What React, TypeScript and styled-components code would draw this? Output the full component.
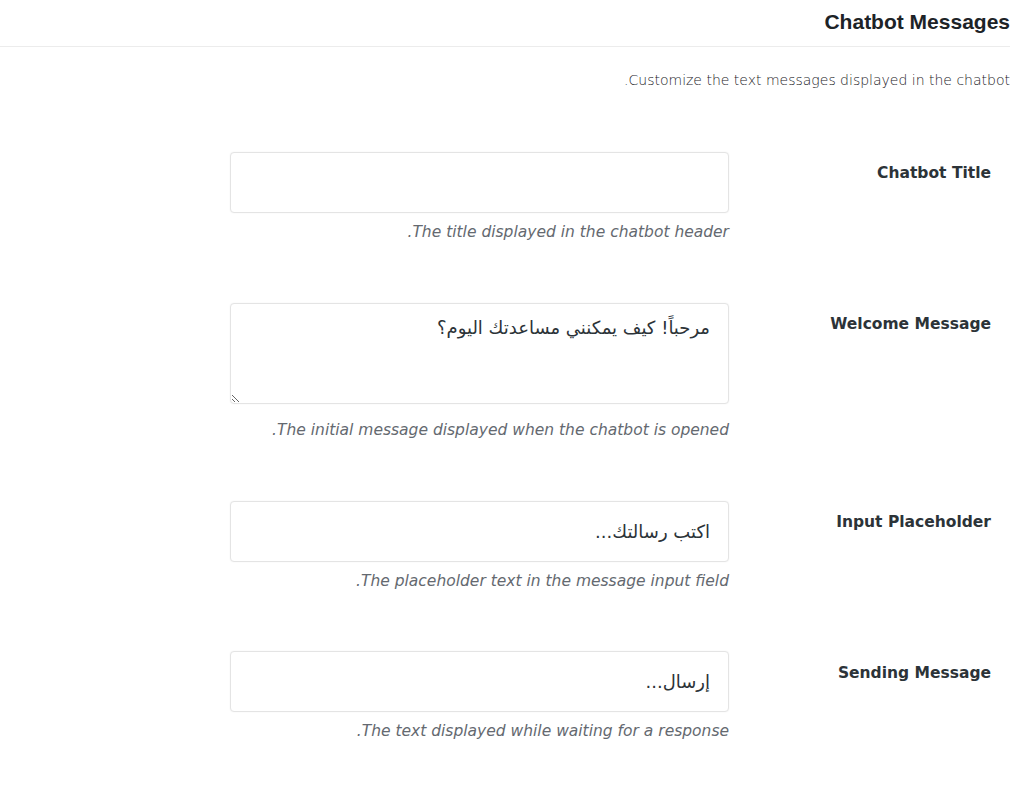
import * as React from 'react';
import styled, { createGlobalStyle } from 'styled-components';

const GlobalStyle = createGlobalStyle`
  body {
    margin: 0;
    background: #ffffff;
    font-family: "DejaVu Sans", Verdana, sans-serif;
    color: #2c3338;
  }
`;

const Page = styled.div`
  direction: rtl;
  width: 1015px;
  padding-right: 5px;
  box-sizing: border-box;
`;

const Header = styled.h2`
  margin: 0;
  height: 47px;
  box-sizing: border-box;
  padding-top: 10px;
  border-bottom: 1px solid #ececec;
  font-family: "Liberation Sans", Arial, sans-serif;
  font-size: 21px;
  font-weight: 700;
  line-height: 24px;
  color: #1d2327;
`;

const Intro = styled.p`
  margin: 23px 0 0;
  font-size: 14px;
  font-weight: 200;
  line-height: 20px;
  color: #1d2327;
`;

const Table = styled.div`
  margin-top: 62px;
  display: flex;
  flex-direction: column;
`;

const Row = styled.div<{ $space: number }>`
  display: flex;
  align-items: flex-start;
  margin-bottom: ${(p) => p.$space}px;
`;

const Label = styled.label<{ $top: number }>`
  width: 200px;
  margin-right: 19px;
  margin-left: 62px;
  padding-top: ${(p) => p.$top}px;
  font-size: 15.5px;
  font-weight: 700;
  line-height: 20px;
  color: #2c3338;
  white-space: nowrap;
`;

const Field = styled.div`
  display: flex;
  flex-direction: column;
  width: 499px;
`;

const fieldBox = `
  width: 100%;
  box-sizing: border-box;
  border: 1px solid #e4e4e4;
  border-radius: 4px;
  box-shadow: 0 0 2px rgba(0, 0, 0, 0.05);
  background: #ffffff;
  font-family: "DejaVu Sans", sans-serif;
  font-size: 18px;
  color: #2c3338;
  direction: rtl;
  outline: none;
`;

const TextInput = styled.input`
  ${fieldBox}
  height: 61px;
  padding: 0 18px;
`;

const TextArea = styled.textarea`
  ${fieldBox}
  display: block;
  height: 101px;
  padding: 11px 18px;
  line-height: 26px;
  resize: vertical;
`;

const Hint = styled.p<{ $gap: number }>`
  margin: ${(p) => p.$gap}px 0 0;
  font-size: 15.5px;
  font-style: italic;
  line-height: 20px;
  color: #646970;
  white-space: nowrap;
`;

const rows = [
  { label: 'Chatbot Title', value: '', hint: 'The title displayed in the chatbot header.', multi: false, top: 11, space: 61 },
  { label: 'Welcome Message', value: 'مرحباً! كيف يمكنني مساعدتك اليوم؟', hint: 'The initial message displayed when the chatbot is opened.', multi: true, top: 11, space: 61 },
  { label: 'Input Placeholder', value: 'اكتب رسالتك...', hint: 'The placeholder text in the message input field.', multi: false, top: 11, space: 60 },
  { label: 'Sending Message', value: 'إرسال...', hint: 'The text displayed while waiting for a response.', multi: false, top: 12, space: 40 },
];

export default function App() {
  return (
    <Page>
      <GlobalStyle />
      <Header>Chatbot Messages</Header>
      <Intro>Customize the text messages displayed in the chatbot.</Intro>
      <Table>
        {rows.map((r) => (
          <Row key={r.label} $space={r.space}>
            <Label $top={r.top}>{r.label}</Label>
            <Field>
              {r.multi ? (
                <TextArea defaultValue={r.value} />
              ) : (
                <TextInput type="text" defaultValue={r.value} />
              )}
              <Hint $gap={r.multi ? 16 : 9}>{r.hint}</Hint>
            </Field>
          </Row>
        ))}
      </Table>
    </Page>
  );
}
